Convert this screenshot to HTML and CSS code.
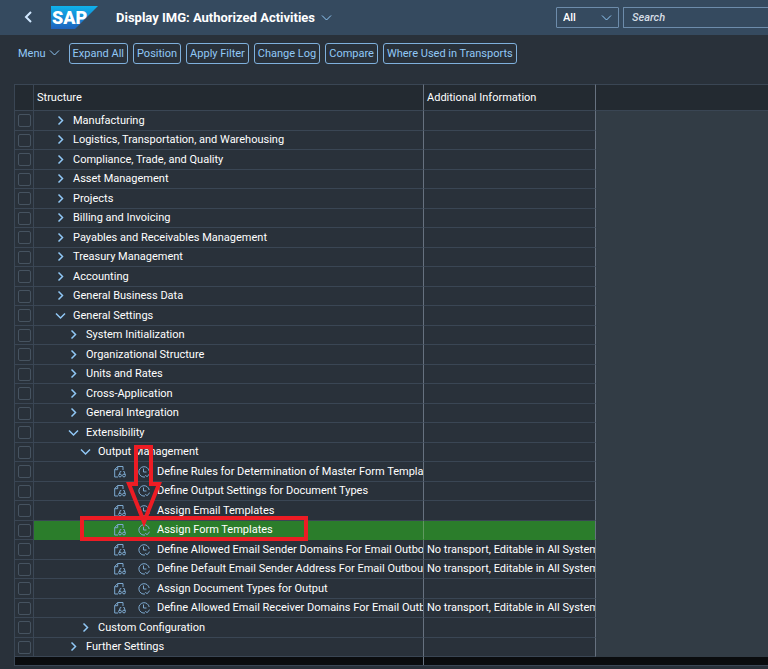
FILE: index.html
```html
<!DOCTYPE html>
<html lang="en">

<head>
    <meta charset="utf-8">
    <meta name="viewport" content="width=device-width, initial-scale=1.0">
    <title>Display IMG: Authorized Activities</title>
    <link rel="stylesheet" href="styles.css">
</head>

<body>
    <svg class="symbols" aria-hidden="true">
        <symbol id="right" viewBox="0 0 12 12"><path d="M4.500 1.500l4 4-4 4" /></symbol>
        <symbol id="down" viewBox="0 0 12 12"><path d="M2 3.500l4.500 4.500L11 3.500" /></symbol>
        <symbol id="doc" viewBox="0 0 12 12">
            <path d="M4 11H.7V3.500L3.700.5H9V4M.7 3.700H3.700V.5" />
            <path d="M5.200 9L6.300 5.500h1M11.200 9L10.300 5.500h-1" />
            <circle cx="6" cy="9.500" r="1.400" /><circle cx="10" cy="9.500" r="1.400" />
        </symbol>
        <symbol id="clock" viewBox="0 0 12 12">
            <path d="M7 11A5.200 5.200 0 1 1 11.200 5M5.500 2.500v3.500h3M7.300 9l1.700 1.800L11.800 7.500" />
        </symbol>
    </svg>

    <header class="shell">
        <button class="back" aria-label="Back"><svg viewBox="0 0 10 14"><path d="M8 1L3 6l5 5" /></svg></button>
        <svg class="logo" viewBox="0 0 47 24" role="img" aria-label="SAP">
            <defs>
                <linearGradient id="blue" x1="0" y1="0" x2="0" y2="1">
                    <stop offset="0" stop-color="#0fb2ec" />
                    <stop offset="1" stop-color="#1e62bd" />
                </linearGradient>
            </defs>
            <path d="M0 0h47L24 23H0z" fill="url(#blue)" stroke="none" />
            <text x="1" y="18">SAP</text>
        </svg>
        <h1>Display IMG: Authorized Activities</h1>
        <svg class="chevron"><use href="#down" /></svg>
        <div class="search">
            <div class="scope">
                <select aria-label="Search scope"><option>All</option></select>
                <svg class="chevron"><use href="#down" /></svg>
            </div>
            <input type="text" placeholder="Search" aria-label="Search">
        </div>
    </header>

    <nav class="toolbar">
        <button class="menu">Menu <svg class="chevron"><use href="#down" /></svg></button>
        <button>Expand All</button>
        <button>Position</button>
        <button>Apply Filter</button>
        <button>Change Log</button>
        <button>Compare</button>
        <button>Where Used in Transports</button>
    </nav>

    <main class="tree">
        <table>
            <colgroup>
                <col class="col-check">
                <col class="col-structure">
                <col class="col-info">
                <col>
            </colgroup>
            <thead>
                <tr><th></th><th>Structure</th><th>Additional Information</th><th></th></tr>
            </thead>
            <tbody>
                <tr><td><input type="checkbox" aria-label="Manufacturing"></td><td class="l1"><svg><use href="#right" /></svg>Manufacturing</td><td></td><td></td></tr>
                <tr><td><input type="checkbox" aria-label="Logistics"></td><td class="l1"><svg><use href="#right" /></svg>Logistics, Transportation, and Warehousing</td><td></td><td></td></tr>
                <tr><td><input type="checkbox" aria-label="Compliance"></td><td class="l1"><svg><use href="#right" /></svg>Compliance, Trade, and Quality</td><td></td><td></td></tr>
                <tr><td><input type="checkbox" aria-label="Asset Management"></td><td class="l1"><svg><use href="#right" /></svg>Asset Management</td><td></td><td></td></tr>
                <tr><td><input type="checkbox" aria-label="Projects"></td><td class="l1"><svg><use href="#right" /></svg>Projects</td><td></td><td></td></tr>
                <tr><td><input type="checkbox" aria-label="Billing and Invoicing"></td><td class="l1"><svg><use href="#right" /></svg>Billing and Invoicing</td><td></td><td></td></tr>
                <tr><td><input type="checkbox" aria-label="Payables and Receivables"></td><td class="l1"><svg><use href="#right" /></svg>Payables and Receivables Management</td><td></td><td></td></tr>
                <tr><td><input type="checkbox" aria-label="Treasury Management"></td><td class="l1"><svg><use href="#right" /></svg>Treasury Management</td><td></td><td></td></tr>
                <tr><td><input type="checkbox" aria-label="Accounting"></td><td class="l1"><svg><use href="#right" /></svg>Accounting</td><td></td><td></td></tr>
                <tr><td><input type="checkbox" aria-label="General Business Data"></td><td class="l1"><svg><use href="#right" /></svg>General Business Data</td><td></td><td></td></tr>
                <tr><td><input type="checkbox" aria-label="General Settings"></td><td class="l1"><svg><use href="#down" /></svg>General Settings</td><td></td><td></td></tr>
                <tr><td><input type="checkbox" aria-label="System Initialization"></td><td class="l2"><svg><use href="#right" /></svg>System Initialization</td><td></td><td></td></tr>
                <tr><td><input type="checkbox" aria-label="Organizational Structure"></td><td class="l2"><svg><use href="#right" /></svg>Organizational Structure</td><td></td><td></td></tr>
                <tr><td><input type="checkbox" aria-label="Units and Rates"></td><td class="l2"><svg><use href="#right" /></svg>Units and Rates</td><td></td><td></td></tr>
                <tr><td><input type="checkbox" aria-label="Cross-Application"></td><td class="l2"><svg><use href="#right" /></svg>Cross-Application</td><td></td><td></td></tr>
                <tr><td><input type="checkbox" aria-label="General Integration"></td><td class="l2"><svg><use href="#right" /></svg>General Integration</td><td></td><td></td></tr>
                <tr><td><input type="checkbox" aria-label="Extensibility"></td><td class="l2"><svg><use href="#down" /></svg>Extensibility</td><td></td><td></td></tr>
                <tr><td><input type="checkbox" aria-label="Output Management"></td><td class="l3"><svg><use href="#down" /></svg>Output Management</td><td></td><td></td></tr>
                <tr><td><input type="checkbox" aria-label="Define Rules"></td><td class="leaf"><svg><use href="#doc" /></svg><svg><use href="#clock" /></svg>Define Rules for Determination of Master Form Templates</td><td></td><td></td></tr>
                <tr><td><input type="checkbox" aria-label="Define Output Settings"></td><td class="leaf"><svg><use href="#doc" /></svg><svg><use href="#clock" /></svg>Define Output Settings for Document Types</td><td></td><td></td></tr>
                <tr><td><input type="checkbox" aria-label="Assign Email Templates"></td><td class="leaf"><svg><use href="#doc" /></svg><svg><use href="#clock" /></svg>Assign Email Templates</td><td></td><td></td></tr>
                <tr class="selected"><td><input type="checkbox" aria-label="Assign Form Templates"></td><td class="leaf"><svg><use href="#doc" /></svg><svg><use href="#clock" /></svg>Assign Form Templates</td><td></td><td></td></tr>
                <tr><td><input type="checkbox" aria-label="Email Sender Domains"></td><td class="leaf"><svg><use href="#doc" /></svg><svg><use href="#clock" /></svg>Define Allowed Email Sender Domains For Email Outbound</td><td>No transport, Editable in All Systems</td><td></td></tr>
                <tr><td><input type="checkbox" aria-label="Default Email Sender"></td><td class="leaf"><svg><use href="#doc" /></svg><svg><use href="#clock" /></svg>Define Default Email Sender Address For Email Outbound</td><td>No transport, Editable in All Systems</td><td></td></tr>
                <tr><td><input type="checkbox" aria-label="Assign Document Types"></td><td class="leaf"><svg><use href="#doc" /></svg><svg><use href="#clock" /></svg>Assign Document Types for Output</td><td></td><td></td></tr>
                <tr><td><input type="checkbox" aria-label="Email Receiver Domains"></td><td class="leaf"><svg><use href="#doc" /></svg><svg><use href="#clock" /></svg>Define Allowed Email Receiver Domains For Email Outbound</td><td>No transport, Editable in All Systems</td><td></td></tr>
                <tr><td><input type="checkbox" aria-label="Custom Configuration"></td><td class="l3"><svg><use href="#right" /></svg>Custom Configuration</td><td></td><td></td></tr>
                <tr><td><input type="checkbox" aria-label="Further Settings"></td><td class="l2"><svg><use href="#right" /></svg>Further Settings</td><td></td><td></td></tr>
            </tbody>
        </table>
        <div class="scrollbar"></div>
        <!-- arrow and frame over the selected row -->
        <svg class="callout" viewBox="0 0 230 98" aria-hidden="true">
            <path d="M57 3h15v37h8L65 78 50 40h7zM3 74h224v21H3z" />
        </svg>
    </main>
</body>

</html>
```
FILE: styles.css
```css
body {
    margin: 0;
    background: #29313a;
    color: #fff;
    font-family: Roboto, "Liberation Sans", sans-serif;
    font-size: 11px;
}

button, input, select {
    font: inherit;
    color: inherit;
    box-sizing: border-box;
}

svg {
    fill: none;
    stroke: #91c8f6;
}

.symbols {
    position: absolute;
    width: 0;
    height: 0;
}

.chevron {
    width: 12px;
    height: 12px;
    flex: none;
}

/* top bar */
.shell {
    display: flex;
    align-items: center;
    height: 35px;
    padding-left: 23px;
    background: #354a5f;
}

.back {
    width: 12px;
    height: 16px;
    padding: 0;
    border: 0;
    background: none;
}

.back svg {
    display: block;
    width: 10px;
    height: 14px;
    stroke: #d1e8ff;
    stroke-width: 2;
}

.logo {
    width: 47px;
    height: 24px;
    margin: 0 18px 0 16px;
}

.logo text {
    fill: #fff;
    stroke: none;
    font: 900 18px Roboto, sans-serif;
}

h1 {
    margin: 0 5px 0 0;
    font-size: 13px;
    font-weight: 700;
    white-space: nowrap;
}

.search {
    display: flex;
    gap: 4px;
    width: 212px;
    margin-left: auto;
}

.scope {
    display: flex;
    align-items: center;
    justify-content: flex-end;
    position: relative;
}

.scope select {
    appearance: none;
    width: 63px;
    height: 21px;
    padding: 0 6px;
    border: 1px solid #6d8cab;
    border-radius: 1px;
    background: none;
    font-weight: 500;
}

.scope .chevron {
    position: absolute;
    right: 7px;
    pointer-events: none;
}

.search input {
    flex: 1;
    min-width: 0;
    height: 21px;
    padding: 0 8px;
    border: 1px solid #6d8cab;
    border-right: 0;
    border-radius: 1px 0 0 1px;
    background: none;
}

.search input::placeholder {
    color: #d5dde5;
    font-style: italic;
    font-weight: 500;
}

/* actions */
.toolbar {
    display: flex;
    align-items: center;
    gap: 5px;
    height: 36px;
    padding: 0 18px 13px;
}

.toolbar button {
    height: 21px;
    padding: 0 3px;
    border: 1px solid #7fb0dc;
    border-radius: 3px;
    background: none;
    color: #91c8f6;
    white-space: nowrap;
}

.toolbar .menu {
    display: flex;
    align-items: center;
    gap: 2px;
    padding: 0;
    border: 0;
    margin-right: 4px;
}

/* tree table */
.tree {
    position: relative;
    margin-left: 14px;
    border-left: 1px solid #3a4654;
    border-bottom: 1px solid #3a4654;
}

table {
    width: 100%;
    table-layout: fixed;
    border-collapse: separate;
    border-spacing: 0;
}

.col-check {
    width: 19px;
}

.col-structure {
    width: 390px;
}

.col-info {
    width: 172px;
}

th, td {
    box-sizing: border-box;
    padding: 0 0 0 3px;
    border-right: 1px solid #3a4654;
    border-bottom: 1px solid #3a4654;
    overflow: hidden;
    text-align: left;
    font-weight: 400;
    line-height: 18px;
    white-space: nowrap;
}

th {
    height: 27px;
    border-top: 1px solid #3a4654;
    background: #232a31;
}

td {
    height: 19px;
}

tr:nth-child(odd) td {
    height: 20px;
}

th:nth-child(2), td:nth-child(2),
th:nth-child(3), td:nth-child(3) {
    border-right-color: #66717f;
}

th:last-child, td:last-child {
    border-right: 0;
}

td:last-child {
    border-bottom: 0;
    background: #323c45;
}

td svg {
    width: 12px;
    height: 12px;
    margin-right: 7px;
    vertical-align: middle;
    stroke-width: 1.5;
}

td input {
    appearance: none;
    display: block;
    width: 13px;
    height: 13px;
    margin: 0;
    border: 1px solid #465360;
    border-radius: 2px;
}

td.l1 {
    padding-left: 20px;
}

td.l2 {
    padding-left: 33px;
}

td.l3 {
    padding-left: 45px;
}

td.leaf {
    padding-left: 80px;
}

.leaf svg {
    stroke: #7da9cf;
    stroke-width: 1;
}

.leaf svg:first-child {
    margin-right: 12px;
}

.selected td:nth-child(2), .selected td:nth-child(3) {
    background: #2b7d2b;
    border-bottom-color: #2b7d2b;
}

.selected td:nth-child(2) {
    border-right-color: #5f9a5f;
}

.scrollbar {
    width: 408px;
    height: 8px;
    border-right: 1px solid #66717f;
    background: #0a0c0e;
    box-shadow: 400px 0 #0a0c0e;
}

.callout {
    position: absolute;
    left: 64px;
    top: 360px;
    width: 230px;
    height: 98px;
    stroke: #ed1c24;
    stroke-width: 4;
    pointer-events: none;
}
```
